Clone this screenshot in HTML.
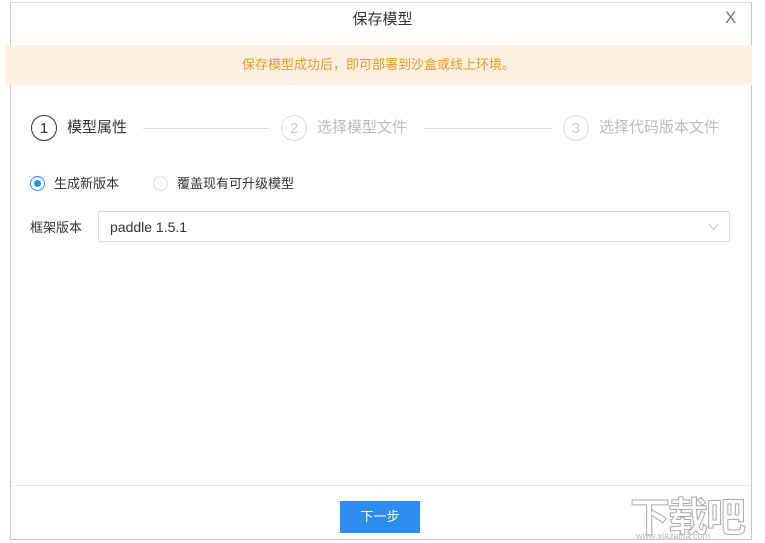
<!DOCTYPE html>
<html><head><meta charset="utf-8"><style>
*{margin:0;padding:0;box-sizing:border-box}
body{width:765px;height:542px;background:#fff;position:relative;overflow:hidden;font-family:"Liberation Sans","Noto Sans CJK SC",sans-serif;}
.frame{position:absolute;left:10px;top:2px;width:742px;height:538px;border:1px solid #c8c8c8;border-top-color:#ddd}
.title{position:absolute;left:0;width:765px;top:8px;text-align:center;font-size:15px;color:#333}
.close{position:absolute;left:725px;top:8px;font-size:17px;color:#777}
.banner{position:absolute;left:5px;top:45px;width:747px;height:40px;background:#fdf0e0;color:#e89a2c;font-size:13px;text-align:center;line-height:40px}
.step{position:absolute;top:115px;height:26px;display:flex;align-items:center;font-size:15px;line-height:26px}
.circ{width:26px;height:26px;border-radius:50%;border:1px solid #333;text-align:center;line-height:26px;font-size:15px;margin-right:10px}
.grey{color:#bbb}.grey .circ{border-color:#ddd;color:#ccc}
.line{position:absolute;top:128px;height:1px;background:#ddd}
.radio{position:absolute;top:175px;display:flex;align-items:center;font-size:13px;color:#333;line-height:17px}
.r{width:15px;height:15px;border-radius:50%;border:1px solid #ddd;margin-right:9px;position:relative}
.r.on{border-color:#2d8cf0}
.r.on:after{content:"";position:absolute;left:3px;top:3px;width:7px;height:7px;border-radius:50%;background:#2d8cf0}
.lbl{position:absolute;left:30px;top:217px;font-size:13px;color:#333}
.sel{position:absolute;left:98px;top:211px;width:632px;height:31px;border:1px solid #ddd;border-radius:2px;font-size:14px;color:#333;line-height:31px;padding-left:11px}
.sel svg{position:absolute;right:10px;top:11px}
.foot{position:absolute;left:11px;top:485px;width:740px;height:1px;background:#e8e8e8}
.btn{position:absolute;left:340px;top:501px;width:80px;height:32px;background:#2d8cf0;color:#fff;font-size:13px;text-align:center;line-height:32px}
.wm{position:absolute;left:630px;top:485px;font-size:40px;color:#fff;-webkit-text-stroke:1px #aaa;font-weight:bold;letter-spacing:-2px}
.wm2{position:absolute;left:636px;top:531px;font-size:9px;color:#bbb}
</style></head><body>
<div class="frame"></div>
<div class="title">保存模型</div>
<div class="close">X</div>
<div class="banner">保存模型成功后，即可部署到沙盒或线上环境。</div>
<div class="step" style="left:31px;color:#333"><div class="circ">1</div>模型属性</div>
<div class="line" style="left:143px;width:126px"></div>
<div class="step grey" style="left:281px"><div class="circ">2</div>选择模型文件</div>
<div class="line" style="left:424px;width:128px"></div>
<div class="step grey" style="left:563px"><div class="circ">3</div>选择代码版本文件</div>
<div class="radio" style="left:30px"><div class="r on"></div>生成新版本</div>
<div class="radio" style="left:153px"><div class="r"></div>覆盖现有可升级模型</div>
<div class="lbl">框架版本</div>
<div class="sel">paddle 1.5.1<svg width="11" height="8" viewBox="0 0 11 8"><path d="M1 1L5.5 6.5L10 1" fill="none" stroke="#ccc" stroke-width="1"/></svg></div>
<div class="foot"></div>
<div class="btn">下一步</div>
<div class="wm">下载吧</div>
<div class="wm2">www.xiazaiba.com</div>
</body></html>
